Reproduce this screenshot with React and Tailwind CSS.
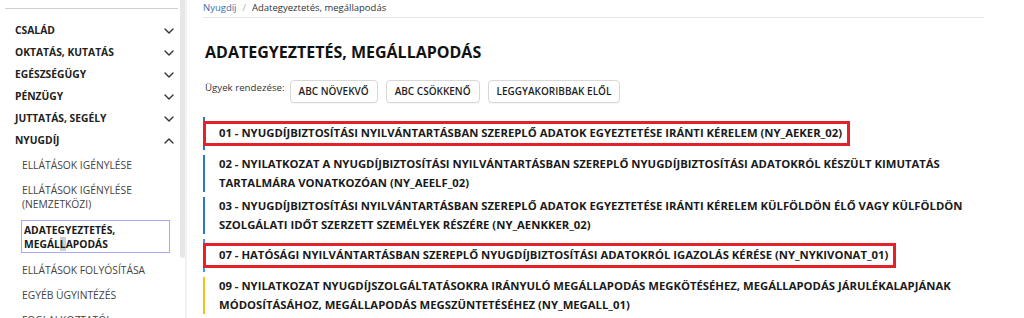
import { ChevronDown, ChevronUp } from "lucide-react";

const topics = [
  { label: "CSALÁD", open: false },
  { label: "OKTATÁS, KUTATÁS", open: false },
  { label: "EGÉSZSÉGÜGY", open: false },
  { label: "PÉNZÜGY", open: false },
  { label: "JUTTATÁS, SEGÉLY", open: false },
  { label: "NYUGDÍJ", open: true },
];

const items = [
  {
    text: "01 - NYUGDÍJBIZTOSÍTÁSI NYILVÁNTARTÁSBAN SZEREPLŐ ADATOK EGYEZTETÉSE IRÁNTI KÉRELEM (NY_AEKER_02)",
    bar: "border-[#2a78c2]",
    marked: true,
  },
  {
    text: "02 - NYILATKOZAT A NYUGDÍJBIZTOSÍTÁSI NYILVÁNTARTÁSBAN SZEREPLŐ NYUGDÍJBIZTOSÍTÁSI ADATOKRÓL KÉSZÜLT KIMUTATÁS TARTALMÁRA VONATKOZÓAN (NY_AEELF_02)",
    bar: "border-[#2a78c2]",
  },
  {
    text: "03 - NYUGDÍJBIZTOSÍTÁSI NYILVÁNTARTÁSBAN SZEREPLŐ ADATOK EGYEZTETÉSE IRÁNTI KÉRELEM KÜLFÖLDÖN ÉLŐ VAGY KÜLFÖLDÖN SZOLGÁLATI IDŐT SZERZETT SZEMÉLYEK RÉSZÉRE (NY_AENKKER_02)",
    bar: "border-[#2a78c2]",
  },
  {
    text: "07 - HATÓSÁGI NYILVÁNTARTÁSBAN SZEREPLŐ NYUGDÍJBIZTOSÍTÁSI ADATOKRÓL IGAZOLÁS KÉRÉSE (NY_NYKIVONAT_01)",
    bar: "border-[#3d9be0]",
    marked: true,
  },
  {
    text: "09 - NYILATKOZAT NYUGDÍJSZOLGÁLTATÁSOKRA IRÁNYULÓ MEGÁLLAPODÁS MEGKÖTÉSÉHEZ, MEGÁLLAPODÁS JÁRULÉKALAPJÁNAK MÓDOSÍTÁSÁHOZ, MEGÁLLAPODÁS MEGSZÜNTETÉSÉHEZ (NY_MEGALL_01)",
    bar: "border-[#f5c21b]",
  },
];

function SubItem({ children }) {
  return (
    <div className="pl-[22px] py-[5.5px] leading-[14px] text-[10.3px] text-[#444]">
      {children}
    </div>
  );
}

function Sidebar() {
  return (
    <div className="flex h-full shrink-0">
      <div className="w-[180px] pt-[8px]">
        <div className="ml-[5px] mr-[2px] border-t border-[#cfcfcf]" />
        <div className="mt-[11px]">
          {topics.map((t) => (
            <div
              key={t.label}
              className="flex h-[22px] items-center justify-between pl-[15px] pr-[3px] text-[10.3px] font-bold text-[#222]"
            >
              <span>{t.label}</span>
              {t.open ? (
                <ChevronUp size={16} strokeWidth={2} className="text-[#333]" />
              ) : (
                <ChevronDown size={16} strokeWidth={2} className="text-[#333]" />
              )}
            </div>
          ))}
        </div>
        <SubItem>ELLÁTÁSOK IGÉNYLÉSE</SubItem>
        <SubItem>
          ELLÁTÁSOK IGÉNYLÉSE
          <br />
          (NEMZETKÖZI)
        </SubItem>
        <div className="ml-[21px] mr-[10px] my-[4px] border border-[#a9a9f2] px-[2px] pt-[2px] pb-[1px] leading-[14px] text-[10.3px] font-bold text-[#1a1a1a]">
          ADATEGYEZTETÉS,
          <br />
          MEGÁL<span className="bg-[#cfcfcf]">L</span>APODÁS
        </div>
        <SubItem>ELLÁTÁSOK FOLYÓSÍTÁSA</SubItem>
        <SubItem>EGYÉB ÜGYINTÉZÉS</SubItem>
        <SubItem>FOGLALKOZTATÓI</SubItem>
      </div>
      <div className="w-[5px]">
        <div className="h-[258px] rounded-b-[3px] bg-[#e7e7e7]" />
      </div>
      <div className="h-full w-[2px] bg-[#f1f1f1]" />
    </div>
  );
}

export default function App() {
  return (
    <div className="flex h-[318px] w-[1024px] overflow-hidden bg-white font-['Open_Sans',sans-serif]">
      <Sidebar />
      <main className="flex-1 pl-[16px] pr-[40px]">
        <div className="h-[18px] border-b border-[#e6e6e6] pt-[1px] text-[9.5px] leading-[14px]">
          <span className="text-[#3b6ea8]">Nyugdíj</span>
          <span className="mx-[6px] text-[#aaa]">/</span>
          <span className="text-[#333]">Adategyeztetés, megállapodás</span>
        </div>
        <h1 className="mt-[22px] pl-[2px] text-[16px] font-bold leading-[24px] text-[#111]">
          ADATEGYEZTETÉS, MEGÁLLAPODÁS
        </h1>
        <div className="mt-[16px] flex items-start pl-[2px]">
          <span className="mr-[5px] text-[9.7px] leading-[16px] text-[#333]">
            Ügyek rendezése:
          </span>
          <div className="flex gap-[8px]">
            {["ABC NÖVEKVŐ", "ABC CSÖKKENŐ", "LEGGYAKORIBBAK ELŐL"].map((b) => (
              <button
                key={b}
                className="h-[23px] rounded-[4px] border border-[#d8d8d8] bg-white px-[8px] text-[10px] font-semibold text-[#1f1f1f] shadow-[0_1px_1px_rgba(0,0,0,0.04)]"
              >
                {b}
              </button>
            ))}
          </div>
        </div>
        <div className="mt-[14px] flex flex-col gap-[5px]">
          {items.map((it) => (
            <div
              key={it.text}
              className={`border-l-2 ${it.bar} pl-[14px] text-[11.3px] font-bold leading-[18.5px] text-[#1a1a1a] ${
                it.marked ? "py-[7.25px]" : ""
              }`}
            >
              {it.marked ? (
                <span className="relative inline-block">
                  <span className="absolute -left-[16px] -right-[8px] -top-[3px] -bottom-[3px] z-10 border-[3px] border-[#e3212b]" />
                  {it.text}
                </span>
              ) : (
                it.text
              )}
            </div>
          ))}
        </div>
      </main>
    </div>
  );
}
